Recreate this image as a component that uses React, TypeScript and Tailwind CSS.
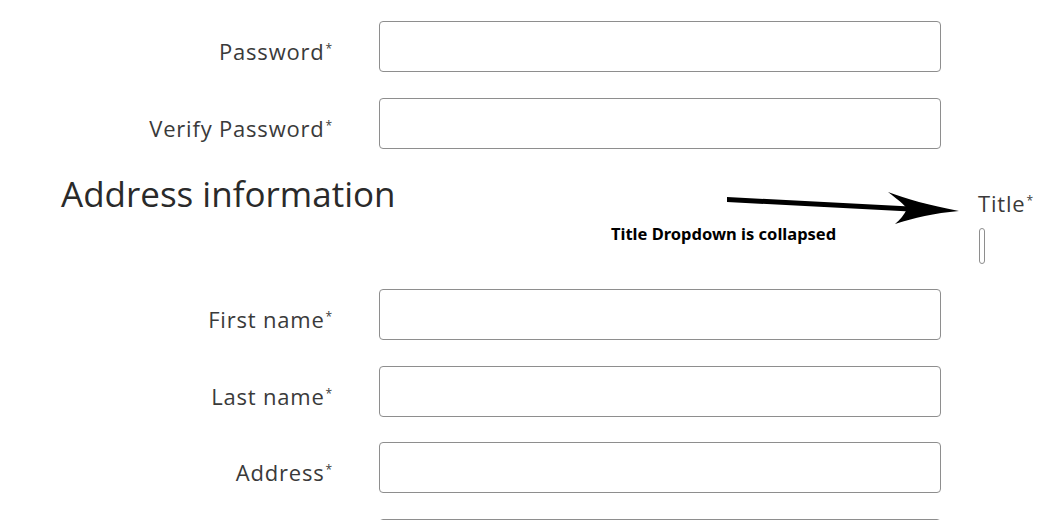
import React from 'react';

const labelFont = { fontFamily: '"Open Sans", Lato, sans-serif' };

function Req() {
  return <span className="relative -top-[7px] ml-[1px] text-[12px]">*</span>;
}

function Field({ label }: { label: string }) {
  return (
    <div className="flex items-start">
      <label className="w-[333px] pt-[17px] text-right text-[22px] leading-[26px] tracking-[0.8px] text-[#3a3a3a]">
        {label}
        {label && <Req />}
      </label>
      <input
        type="text"
        className="ml-[46px] h-[51px] w-[562px] rounded-[4px] border border-[#8e8e8e] bg-white outline-none"
      />
    </div>
  );
}

function Arrow() {
  return (
    <svg
      width="240"
      height="40"
      viewBox="0 0 240 40"
      className="absolute left-[724px] top-[190px]"
    >
      <path d="M3 7 L186 16.5 L186 21.5 L3 12 Z" fill="#000" />
      <path
        d="M235 21 C205 15 182 9 164 2 C173 9 180 14 183 19 C180 25 176 30 171 34 C190 28 210 23 235 21 Z"
        fill="#000"
      />
    </svg>
  );
}

export default function App() {
  return (
    <div className="relative h-[520px] w-[1057px] overflow-hidden bg-white" style={labelFont}>
      <div className="flex flex-col gap-[26px] pt-[21px]">
        <Field label="Password" />
        <Field label="Verify Password" />
      </div>

      <div className="flex h-[140px] items-start">
        <h2 className="w-[978px] pl-[61px] pt-[25px] text-[35px] leading-[40px] text-[#2a2a2a]">
          Address information
        </h2>
        <div className="flex flex-col pt-[41px]">
          <span className="text-[22px] leading-[26px] tracking-[0.8px] text-[#3a3a3a]">
            Title
            <Req />
          </span>
          <select className="ml-[1px] mt-[7px] h-[36px] w-[6px] appearance-none rounded-[3px] border border-[#8e8e8e] bg-white" />
        </div>
      </div>

      <div className="flex flex-col gap-[25.5px]">
        <Field label="First name" />
        <Field label="Last name" />
        <Field label="Address" />
        <Field label="" />
      </div>

      <Arrow />
      <span
        className="absolute left-[611px] top-[224px] text-[16.5px] font-bold leading-[20px] text-black"
        style={{ fontFamily: '"Noto Sans", sans-serif' }}
      >
        Title Dropdown is collapsed
      </span>
    </div>
  );
}
